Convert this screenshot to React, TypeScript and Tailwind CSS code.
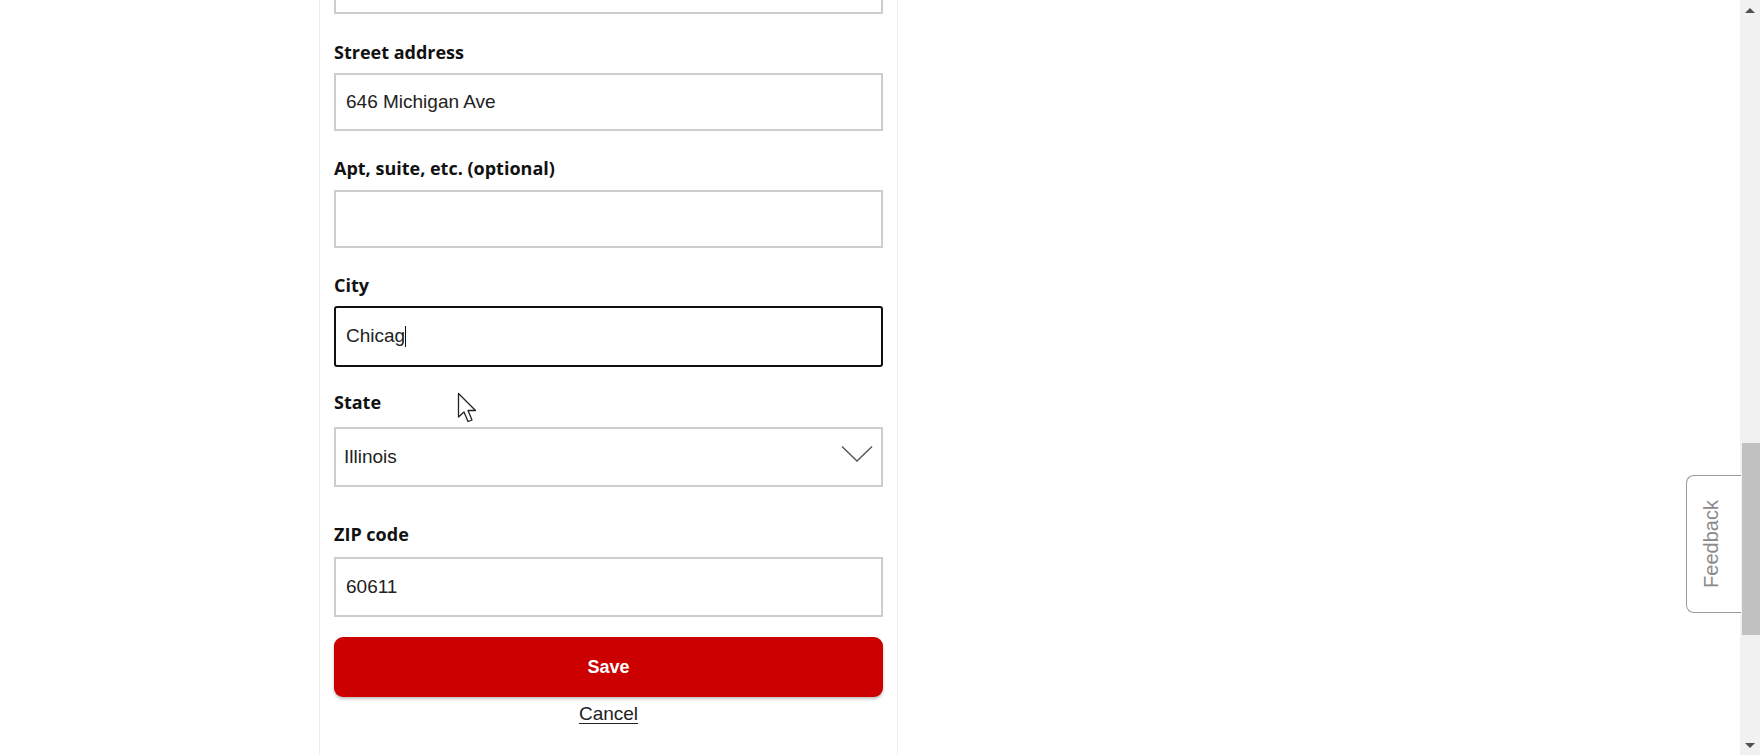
import React from "react";

const labelCls =
  "block text-[18px] leading-[24px] font-bold text-[#111] [font-family:'Open_Sans','Noto_Sans',sans-serif]";
const inputCls =
  "w-full border-2 border-[#cdcdcd] bg-white flex items-center pl-[10px] text-[19px] text-[#222] [font-family:'Liberation_Sans',Arial,sans-serif]";

function Cursor() {
  return (
    <svg
      className="absolute left-[457px] top-[392px]"
      width="22"
      height="32"
      viewBox="0 0 22 32"
    >
      <path
        d="M1.5 1.5 L1.5 25 L7 20 L11 29.5 L15 28 L11 18.5 L18.5 18.5 Z"
        fill="#fff"
        stroke="#222"
        strokeWidth="1.3"
        strokeLinejoin="round"
      />
    </svg>
  );
}

export default function App() {
  return (
    <div className="relative w-[1760px] h-[755px] overflow-hidden bg-white flex [font-family:'Liberation_Sans',Arial,sans-serif]">
      <div className="flex-1 h-full">
        <div className="ml-[319px] w-[579px] h-full border-x border-[#ececec] bg-white px-[14px] flex flex-col">
          {/* partially visible input */}
          <div className={inputCls + " h-[58px] -mt-[44px]"} />

          <label className={labelCls + " mt-[26px]"}>Street address</label>
          <div className={inputCls + " h-[58px] mt-[9px]"}>646 Michigan Ave</div>

          <label className={labelCls + " mt-[25px]"}>Apt, suite, etc. (optional)</label>
          <div className={inputCls + " h-[58px] mt-[10px]"} />

          <label className={labelCls + " mt-[25px]"}>City</label>
          <div className="mt-[9px] w-full h-[61px] border-2 border-[#111] rounded-[3px] bg-white flex items-center pl-[10px] text-[19px] text-[#222] [font-family:'Liberation_Sans',Arial,sans-serif]">
            <span>Chicag</span>
            <span className="inline-block w-px h-[21px] bg-[#111]" />
          </div>

          <label className={labelCls + " mt-[23px]"}>State</label>
          <div className="mt-[13px] w-full h-[60px] border-2 border-[#cdcdcd] bg-white flex items-center justify-between pl-[8px] pr-[8px] text-[19px] text-[#222] [font-family:'Liberation_Sans',Arial,sans-serif]">
            <span>Illinois</span>
            <svg width="32" height="18" viewBox="0 0 32 18" className="-mt-[6px]">
              <polyline
                points="1,1.5 16,16 31,1.5"
                fill="none"
                stroke="#555"
                strokeWidth="1.4"
              />
            </svg>
          </div>

          <label className={labelCls + " mt-[35px]"}>ZIP code</label>
          <div className={inputCls + " h-[60px] mt-[11px]"}>60611</div>

          <button className="mt-[20px] w-full h-[60px] shrink-0 rounded-[9px] bg-[#cc0000] text-white text-[18px] font-bold shadow-[0_2px_3px_rgba(0,0,0,0.25)] [font-family:'Liberation_Sans',Arial,sans-serif]">
            Save
          </button>
          <div className="mt-[5px] text-center leading-[24px]">
            <span className="text-[19px] text-[#222] underline underline-offset-[3px]">
              Cancel
            </span>
          </div>
        </div>
      </div>

      {/* scrollbar */}
      <div className="w-[20px] h-full bg-[#f1f1f1] flex flex-col items-center">
        <div className="h-[20px] w-full flex items-center justify-center">
          <div className="w-0 h-0 border-x-[5px] border-x-transparent border-b-[5px] border-b-[#505050]" />
        </div>
        <div className="mt-[423px] w-[18px] ml-[2px] h-[192px] bg-[#c1c1c1]" />
        <div className="flex-1" />
        <div className="h-[20px] w-full flex items-center justify-center">
          <div className="w-0 h-0 border-x-[5px] border-x-transparent border-t-[5px] border-t-[#505050]" />
        </div>
      </div>

      {/* feedback tab */}
      <div className="absolute left-[1686px] top-[475px] w-[55px] h-[138px] bg-white border border-r-0 border-[#9a9a9a] rounded-l-[8px] flex items-center justify-center">
        <span className="block -rotate-90 whitespace-nowrap text-[20px] text-[#8a8a8a] -ml-[6px]">
          Feedback
        </span>
      </div>

      <Cursor />
    </div>
  );
}
